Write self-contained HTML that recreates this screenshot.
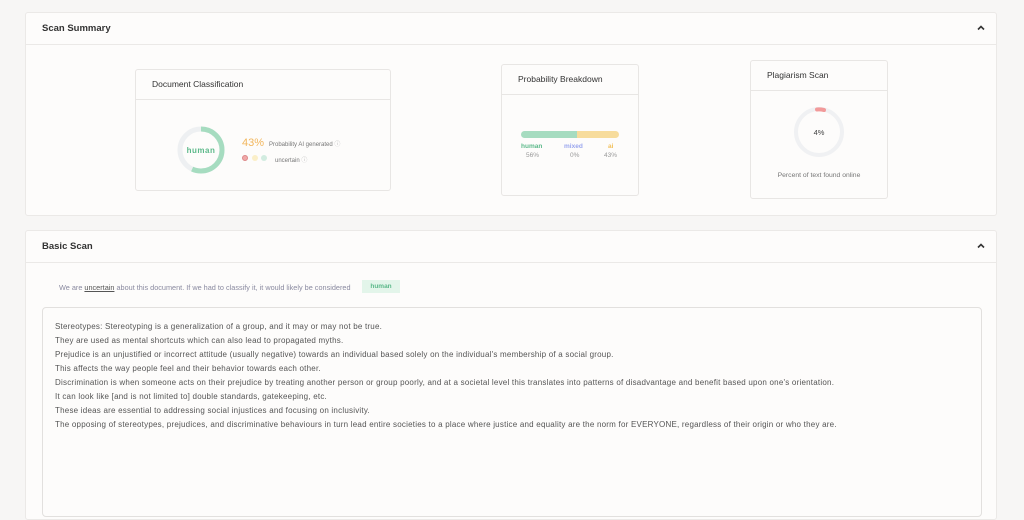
<!DOCTYPE html>
<html><head><meta charset="utf-8"><style>
*{box-sizing:border-box;margin:0;padding:0}
body{width:1024px;height:505px;overflow:hidden;background:#f7f6f5;font-family:"Liberation Sans",sans-serif;color:#444;position:relative}
.abs{position:absolute}
.panel{position:absolute;left:25px;width:972px;background:#fdfcfb;border:1px solid #ebe9e7;border-radius:3px}
.ph{height:32px;border-bottom:1px solid #ebe9e7;font-size:9.5px;font-weight:bold;color:#333;padding:10px 0 0 16px;position:relative}
.chev{position:absolute;right:10px;top:10px;width:10px;height:10px}
.card{position:absolute;background:#fdfcfb;border:1px solid #e8e6e4;border-radius:3px}
.ch{border-bottom:1px solid #e8e6e4;font-size:8.5px;color:#333;padding-left:16px}
.t{font-size:8px;color:#555;line-height:14px;position:absolute;left:55px;top:320px;letter-spacing:0.22px;white-space:nowrap}
</style></head><body>
<div class="panel" style="top:12px;height:204px">
 <div class="ph">Scan Summary<svg class="chev" viewBox="0 0 10 10"><path d="M2 6.5L5 3.5L8 6.5" fill="none" stroke="#333" stroke-width="1.6"/></svg></div>
</div>
<div class="card" style="left:135px;top:69px;width:256px;height:122px">
 <div class="ch" style="height:30px;line-height:28px">Document Classification</div>
</div>
<svg class="abs" style="left:176px;top:125px" width="50" height="50" viewBox="0 0 50 50">
 <circle cx="25" cy="25" r="21" fill="none" stroke="#eef0f2" stroke-width="5"/>
 <circle cx="25" cy="25" r="21" fill="none" stroke="#a6dcc0" stroke-width="5" stroke-dasharray="75 132" transform="rotate(-90 25 25)"/>
 <text x="25" y="28" text-anchor="middle" font-size="8" font-weight="bold" fill="#5cb98a" font-family="Liberation Sans" letter-spacing="0.5">human</text>
</svg>
<div class="abs" style="left:242px;top:137px;font-size:11px;color:#f2b65c">43%</div>
<div class="abs" style="left:269px;top:139px;font-size:6px;color:#777">Probability AI generated <span style="color:#bbb">ⓘ</span></div>
<div class="abs" style="left:242px;top:155px;width:6px;height:6px;border-radius:50%;background:#f0a8a8;border:1px solid #d88"></div>
<div class="abs" style="left:252px;top:155px;width:6px;height:6px;border-radius:50%;background:#fbefc8"></div>
<div class="abs" style="left:261px;top:155px;width:6px;height:6px;border-radius:50%;background:#d2ece0"></div>
<div class="abs" style="left:275px;top:155px;font-size:6px;color:#777">uncertain <span style="color:#bbb">ⓘ</span></div>

<div class="card" style="left:501px;top:64px;width:138px;height:132px">
 <div class="ch" style="height:30px;line-height:28px">Probability Breakdown</div>
</div>
<div class="abs" style="left:521px;top:131px;width:56px;height:7px;background:#a6dcc0;border-radius:4px 0 0 4px"></div>
<div class="abs" style="left:577px;top:131px;width:42px;height:7px;background:#f7dc9c;border-radius:0 4px 4px 0"></div>
<div class="abs" style="left:521px;top:143px;font-size:6.5px;font-weight:bold;color:#5cb98a">human</div>
<div class="abs" style="left:564px;top:143px;font-size:6.5px;font-weight:bold;color:#9aa6ee">mixed</div>
<div class="abs" style="left:608px;top:143px;font-size:6.5px;font-weight:bold;color:#f2c05c">ai</div>
<div class="abs" style="left:526px;top:152px;font-size:6.5px;color:#999">56%</div>
<div class="abs" style="left:570px;top:152px;font-size:6.5px;color:#999">0%</div>
<div class="abs" style="left:604px;top:152px;font-size:6.5px;color:#999">43%</div>

<div class="card" style="left:750px;top:60px;width:138px;height:139px">
 <div class="ch" style="height:30px;line-height:28px">Plagiarism Scan</div>
</div>
<svg class="abs" style="left:794px;top:107px" width="50" height="50" viewBox="0 0 50 50">
 <circle cx="25" cy="25" r="23" fill="none" stroke="#f0f1f3" stroke-width="4"/>
 <path d="M23 2.5 A23 23 0 0 1 30 3" fill="none" stroke="#f29a9a" stroke-width="4" stroke-linecap="round"/>
 <text x="25" y="28" text-anchor="middle" font-size="7.5" fill="#444" font-family="Liberation Sans">4%</text>
</svg>
<div class="abs" style="left:750px;top:172px;width:138px;text-align:center;font-size:6.8px;color:#777">Percent of text found online</div>

<div class="panel" style="top:230px;height:290px">
 <div class="ph">Basic Scan<svg class="chev" viewBox="0 0 10 10"><path d="M2 6.5L5 3.5L8 6.5" fill="none" stroke="#333" stroke-width="1.6"/></svg></div>
</div>
<div class="abs" style="left:59px;top:283px;font-size:7.3px;color:#8a8aa0;white-space:nowrap">We are <span style="text-decoration:underline;color:#555">uncertain</span> about this document. If we had to classify it, it would likely be considered</div>
<div class="abs" style="left:362px;top:280px;width:38px;height:13px;background:#e3f5ea;color:#5cb98a;font-size:6.5px;font-weight:bold;text-align:center;line-height:13px">human</div>
<div class="abs" style="left:42px;top:307px;width:940px;height:210px;background:#fdfcfb;border:1px solid #e2e0de;border-radius:4px"></div>
<div class="t">Stereotypes: Stereotyping is a generalization of a group, and it may or may not be true.<br>They are used as mental shortcuts which can also lead to propagated myths.<br>Prejudice is an unjustified or incorrect attitude (usually negative) towards an individual based solely on the individual's membership of a social group.<br>This affects the way people feel and their behavior towards each other.<br>Discrimination is when someone acts on their prejudice by treating another person or group poorly, and at a societal level this translates into patterns of disadvantage and benefit based upon one's orientation.<br>It can look like [and is not limited to] double standards, gatekeeping, etc.<br>These ideas are essential to addressing social injustices and focusing on inclusivity.<br>The opposing of stereotypes, prejudices, and discriminative behaviours in turn lead entire societies to a place where justice and equality are the norm for EVERYONE, regardless of their origin or who they are.</div>
</body></html>
